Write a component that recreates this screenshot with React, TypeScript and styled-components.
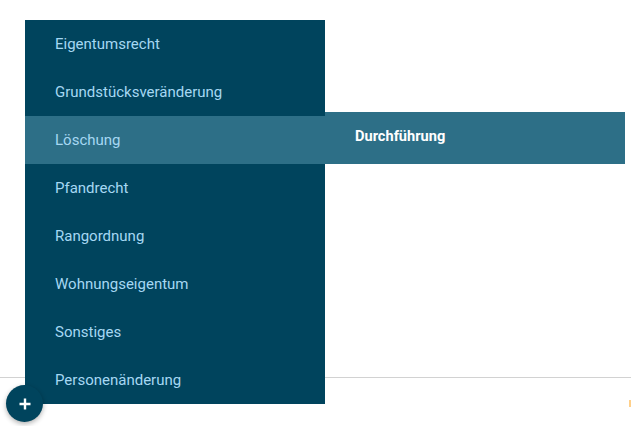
import React from "react";
import styled, { createGlobalStyle } from "styled-components";

const GlobalStyle = createGlobalStyle`
	html, body {
		margin: 0;
		padding: 0;
		background: #ffffff;
		font-family: Roboto, "Liberation Sans", Arial, sans-serif;
	}
`;

const Page = styled.div`
	position: relative;
	width: 631px;
	height: 426px;
	overflow: hidden;
	display: flex;
	flex-direction: column;
	background: #ffffff;
`;

const Content = styled.div`
	height: 377px;
	flex-shrink: 0;
`;

const Footer = styled.div`
	flex: 1;
	border-top: 1px solid #d2d2d2;
	display: flex;
	justify-content: flex-end;
	align-items: flex-start;
	padding-top: 22px;
`;

const OrangeMark = styled.div`
	width: 2px;
	height: 7px;
	background: #ffd08a;
`;

// popup menu lies over the page content
const Menu = styled.ul`
	position: absolute;
	left: 25px;
	top: 20px;
	width: 300px;
	margin: 0;
	padding: 0;
	list-style: none;
	background: #00445d;
	z-index: 2;
`;

interface ItemProps {
	active?: boolean;
}

const MenuItem = styled.li<ItemProps>`
	position: relative;
	height: 48px;
	display: flex;
	align-items: center;
	padding-left: 30px;
	font-size: 15px;
	color: #a6d8f3;
	background: ${({ active }) => (active ? "#2d6f87" : "transparent")};
	cursor: pointer;
`;

const SubMenu = styled.ul`
	position: absolute;
	left: 300px;
	top: -4px;
	width: 300px;
	margin: 0;
	padding: 0 0 4px;
	list-style: none;
	background: #2d6f87;
`;

const SubItem = styled.li`
	height: 48px;
	display: flex;
	align-items: center;
	padding-left: 30px;
	font-size: 14.6px;
	font-weight: 700;
	color: #ffffff;
`;

const Fab = styled.button`
	position: absolute;
	left: 6px;
	top: 385px;
	width: 37px;
	height: 37px;
	border: none;
	border-radius: 50%;
	padding: 0;
	background: #00445d;
	box-shadow: 0 2px 5px rgba(0, 0, 0, 0.3);
	display: flex;
	align-items: center;
	justify-content: center;
	z-index: 3;
	cursor: pointer;
`;

const items = [
	"Eigentumsrecht",
	"Grundstücksveränderung",
	"Löschung",
	"Pfandrecht",
	"Rangordnung",
	"Wohnungseigentum",
	"Sonstiges",
	"Personenänderung",
];

const App: React.FC = () => {
	return (
		<>
			<GlobalStyle />
			<Page>
				<Content />
				<Footer>
					<OrangeMark />
				</Footer>
				<Menu>
					{items.map(label => (
						<MenuItem key={label} active={label === "Löschung"}>
							{label}
							{label === "Löschung" && (
								<SubMenu>
									<SubItem>Durchführung</SubItem>
								</SubMenu>
							)}
						</MenuItem>
					))}
				</Menu>
				<Fab>
					<svg width="12" height="12" viewBox="0 0 12 12">
						<path d="M6 0.5v11M0.5 6h11" stroke="#ffffff" strokeWidth="2.4" strokeLinecap="butt" />
					</svg>
				</Fab>
			</Page>
		</>
	);
};

export default App;
